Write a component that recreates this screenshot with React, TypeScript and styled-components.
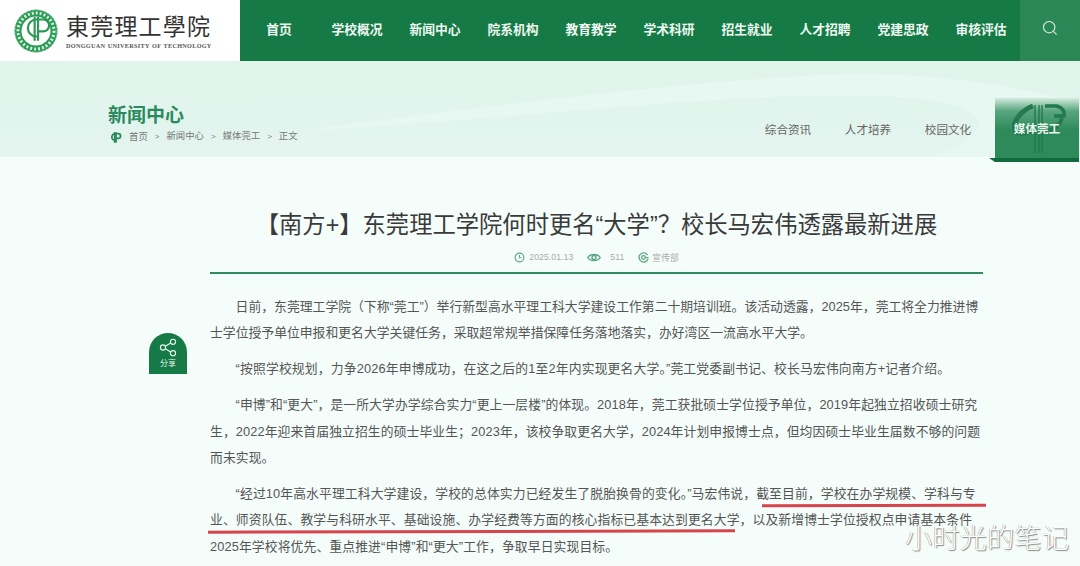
import styled, { createGlobalStyle } from 'styled-components';

const GlobalStyle = createGlobalStyle`
  html, body {
    margin: 0;
    padding: 0;
    height: 566px;
    overflow: hidden;
    background: #f4fdfa;
    font-family: 'Liberation Sans', 'Noto Sans CJK SC', sans-serif;
  }
`;

const Page = styled.div`
  position: relative;
  width: 1080px;
  height: 566px;
  overflow: hidden;
`;

const Header = styled.header`
  display: flex;
  height: 61px;
  background: #fff;
`;

const Brand = styled.div`
  width: 240px;
  display: flex;
  align-items: center;
  gap: 7px;
  padding: 0 0 0 13px;
  box-sizing: border-box;
`;

const BrandText = styled.div`
  display: flex;
  flex-direction: column;
  gap: 2px;
`;

const BrandName = styled.div`
  font-family: 'Noto Sans CJK TC', sans-serif;
  font-size: 23px;
  line-height: 29px;
  letter-spacing: 1.2px;
  color: #333;
  white-space: nowrap;
`;

const BrandEn = styled.div`
  font-family: 'Liberation Serif', serif;
  font-size: 6.2px;
  font-weight: 700;
  line-height: 8px;
  letter-spacing: 0.3px;
  word-spacing: 0.8px;
  color: #555;
  white-space: nowrap;
`;

const Nav = styled.nav`
  width: 780px;
  display: grid;
  grid-template-columns: repeat(10, 78px);
  background: #157a45;
`;

const NavItem = styled.a`
  display: flex;
  align-items: center;
  justify-content: center;
  padding-bottom: 4px;
  color: #eef8f2;
  font-size: 12.8px;
  font-weight: 700;
  white-space: nowrap;
`;

const SearchBox = styled.div`
  width: 60px;
  display: flex;
  align-items: center;
  justify-content: center;
  padding-bottom: 5px;
  background: #2c8757;
`;

const Banner = styled.section`
  position: relative;
  height: 96px;
  display: flex;
  justify-content: space-between;
  align-items: flex-end;
  padding-left: 108px;
  background: linear-gradient(180deg, #e0f4ec 0%, #e3f5ee 100%);
  overflow: visible;
`;

const Waves = styled.svg`
  position: absolute;
  inset: 0;
  width: 100%;
  height: 100%;
`;

const BannerLeft = styled.div`
  position: relative;
  display: flex;
  flex-direction: column;
  gap: 2px;
  padding-bottom: 13px;
`;

const BannerTitle = styled.h2`
  margin: 0;
  font-family: 'Noto Sans CJK SC', sans-serif;
  font-size: 19px;
  line-height: 26px;
  font-weight: 700;
  color: #2b8a5f;
`;

const Crumbs = styled.div`
  display: flex;
  align-items: center;
  font-size: 9.4px;
  line-height: 14px;
  color: #777;
`;

const CrumbLogo = styled.svg`
  width: 14px;
  height: 14px;
  margin-right: 7px;
`;

const CrumbSep = styled.span`
  margin: 0 7px;
  font-size: 8px;
`;

const Tabs = styled.div`
  position: relative;
  display: flex;
  align-items: flex-end;
  height: 100%;
  padding-right: 1px;
`;

const Tab = styled.a`
  width: 80px;
  height: 57px;
  display: flex;
  align-items: center;
  justify-content: center;
  font-size: 11.6px;
  color: #666;
  white-space: nowrap;
`;

const ActiveTab = styled.a`
  position: relative;
  width: 84px;
  height: 64px;
  margin-left: 7px;
  margin-bottom: -5px;
  padding-bottom: 4px;
  box-sizing: border-box;
  display: flex;
  align-items: center;
  justify-content: center;
  font-size: 11.6px;
  font-weight: 700;
  color: #e9f6ef;
  white-space: nowrap;
  background: linear-gradient(180deg, #d4ebdf 0%, #5aa67f 20%, #2e8a5a 50%, #2e8a5a 100%);
  box-shadow: inset 0 -4px 0 #0f6b3e;

  &::before {
    content: '';
    position: absolute;
    left: -6px;
    bottom: 0;
    border-top: 4px solid #0f6b3e;
    border-left: 6px solid transparent;
    height: 0;
    width: 0;
  }
`;

const TabMark = styled.svg`
  position: absolute;
  left: 17px;
  top: 5px;
  width: 56px;
  height: 55px;
`;

const TabLabel = styled.span`
  position: relative;
`;

const Article = styled.main`
  width: 773px;
  margin-left: 210px;
  color: #555;
`;

const Title = styled.h1`
  margin: 0;
  padding-top: 52px;
  font-size: 23.3px;
  line-height: 32px;
  font-weight: 400;
  color: #3a3a3a;
  text-align: center;
  white-space: nowrap;
`;

const Meta = styled.div`
  display: flex;
  align-items: center;
  justify-content: center;
  gap: 14px;
  height: 16px;
  margin-top: 8px;
  padding-bottom: 7px;
  font-size: 8.8px;
  color: #aaa;
`;

const MetaItem = styled.span<{ $gap: number }>`
  display: flex;
  align-items: center;
  gap: ${(p) => p.$gap}px;
`;

const MetaIcon = styled.svg<{ $w?: number }>`
  width: ${(p) => p.$w ?? 11}px;
  height: 11px;
  fill: none;
  stroke: #5aa582;
  stroke-width: 1.2;
`;

const Rule = styled.div`
  height: 2px;
  background: #2f8d61;
`;

const Body = styled.div`
  padding-top: 20px;
`;

const Para = styled.p<{ $track: number }>`
  margin: 0 0 9.5px;
  font-size: 12.8px;
  line-height: 26.4px;
  letter-spacing: ${(p) => p.$track}px;
  text-indent: 2em;
  color: #555;
  white-space: nowrap;
`;

// red strokes that someone drew over the screenshot by hand
const RedStroke = styled.div<{ $left: number; $top: number; $width: number }>`
  position: absolute;
  left: ${(p) => p.$left}px;
  top: ${(p) => p.$top}px;
  width: ${(p) => p.$width}px;
  height: 2.5px;
  background: #d8444c;
  transform: rotate(-0.15deg);
`;

const ShareTag = styled.div`
  position: absolute;
  left: 149px;
  top: 333px;
  width: 38px;
  height: 41px;
  border-radius: 19px 19px 0 0;
  background: #157a45;
  color: #e8f6ee;
  display: flex;
  flex-direction: column;
  align-items: center;
  padding-top: 5px;
  box-sizing: border-box;
  font-size: 8px;
  line-height: 11px;
  gap: 1px;
`;

const Watermark = styled.div`
  position: absolute;
  left: 905px;
  top: 524px;
  font-family: 'Noto Sans CJK SC', sans-serif;
  font-size: 27px;
  line-height: 26px;
  font-weight: 300;
  letter-spacing: 0.4px;
  color: #fff;
  white-space: nowrap;
  text-shadow: 1px 1px 1px #888, -0.5px -0.5px 0 #aaa;
`;

const navItems = ['首页', '学校概况', '新闻中心', '院系机构', '教育教学', '学术科研', '招生就业', '人才招聘', '党建思政', '审核评估'];
const crumbs = ['首页', '新闻中心', '媒体莞工', '正文'];
const tabs = ['综合资讯', '人才培养', '校园文化'];

// the "CP" mark from the school logo
function Mark({ color, width = 3 }: { color: string; width?: number }) {
  return (
    <g fill="none" stroke={color} strokeWidth={width} strokeLinecap="round">
      <path d="M21 10 A10 10 0 1 0 21 30" />
      <path d="M19 8 V34" />
      <path d="M23 8 V34" />
      <path d="M23 10 H29 A7 7 0 0 1 29 24 H23" />
    </g>
  );
}

export default function App() {
  return (
    <Page>
      <GlobalStyle />
      <Header>
        <Brand>
          <svg width="46" height="46" viewBox="0 0 46 46">
            <circle cx="23" cy="23" r="21.5" fill="#2a9a55" />
            <circle cx="23" cy="23" r="14.5" fill="#fff" />
            <circle cx="23" cy="23" r="21" fill="none" stroke="#bfe3cb" strokeWidth="0.6" strokeDasharray="2 1.5" />
            <circle cx="23" cy="23" r="18" fill="none" stroke="#d7efdf" strokeWidth="3" strokeDasharray="2 2" />
            <g transform="translate(5.5 3) scale(0.85)">
              <Mark color="#2a9a55" width={2.6} />
            </g>
          </svg>
          <BrandText>
            <BrandName>東莞理工學院</BrandName>
            <BrandEn>DONGGUAN UNIVERSITY OF TECHNOLOGY</BrandEn>
          </BrandText>
        </Brand>
        <Nav>
          {navItems.map((item) => (
            <NavItem key={item}>{item}</NavItem>
          ))}
        </Nav>
        <SearchBox>
          <svg width="16" height="16" viewBox="0 0 16 16" fill="none" stroke="#d9efe3" strokeWidth="1.1">
            <circle cx="7.2" cy="7.2" r="5.7" />
            <path d="M11.4 11.4 L14.6 14.6" />
          </svg>
        </SearchBox>
      </Header>

      <Banner>
        <Waves viewBox="0 0 1080 96" preserveAspectRatio="none">
          <path d="M300 70 C520 40 700 20 820 14 C900 10 1000 18 1080 44 L1080 96 L930 96 C1000 70 1000 44 900 36 C760 26 500 60 300 70 Z" fill="#e7f7f1" />
        </Waves>
        <BannerLeft>
          <BannerTitle>新闻中心</BannerTitle>
          <Crumbs>
            <CrumbLogo viewBox="0 0 40 40">
              <Mark color="#2b8a5f" width={5} />
            </CrumbLogo>
            {crumbs.map((crumb, i) => (
              <span key={crumb}>
                {i > 0 && <CrumbSep>&gt;</CrumbSep>}
                {crumb}
              </span>
            ))}
          </Crumbs>
        </BannerLeft>
        <Tabs>
          {tabs.map((tab) => (
            <Tab key={tab}>{tab}</Tab>
          ))}
          <ActiveTab>
            <TabMark viewBox="0 0 56 55" fill="none" stroke="#227a4e">
              <path d="M21 3 C10 7 2 17 2 24 C2 31 11 32 21 27" strokeWidth="5" />
              <path d="M23 2 V50 M27 2 V50 M30 2 V50" strokeWidth="1.4" />
              <path d="M33 3 H44 C50 4 53 8 52 13 L42 13 M50 15 C48 23 42 27 33 28" strokeWidth="3.5" />
            </TabMark>
            <TabLabel>媒体莞工</TabLabel>
          </ActiveTab>
        </Tabs>
      </Banner>

      <Article>
        <Title>【南方+】东莞理工学院何时更名“大学”？校长马宏伟透露最新进展</Title>
        <Meta>
          <MetaItem $gap={4}>
            <MetaIcon viewBox="0 0 12 12">
              <circle cx="6" cy="6" r="4.8" />
              <path d="M6 3.4 V6.2 H8.2" />
            </MetaIcon>
            2025.01.13
          </MetaItem>
          <MetaItem $gap={9}>
            <MetaIcon $w={14} viewBox="0 0 14 11">
              <path d="M0.8 5.5 C3 1.4 11 1.4 13.2 5.5 C11 9.6 3 9.6 0.8 5.5 Z" strokeWidth="1.4" />
              <circle cx="7" cy="5.5" r="2" strokeWidth="1.4" />
            </MetaIcon>
            511
          </MetaItem>
          <MetaItem $gap={3}>
            <MetaIcon viewBox="0 0 12 12">
              <path d="M10.4 3.4 A5 5 0 1 0 11 7" strokeWidth="1.4" />
              <circle cx="6" cy="6" r="2" strokeWidth="1.4" />
              <path d="M8 6 H11.4" strokeWidth="1.2" />
            </MetaIcon>
            宣传部
          </MetaItem>
        </Meta>
        <Rule />
        <Body>
          <Para $track={0.03}>
            日前，东莞理工学院（下称“莞工”）举行新型高水平理工科大学建设工作第二十期培训班。该活动透露，2025年，莞工将全力推进博
            <br />
            士学位授予单位申报和更名大学关键任务，采取超常规举措保障任务落地落实，办好湾区一流高水平大学。
          </Para>
          <Para $track={0.16}>“按照学校规划，力争2026年申博成功，在这之后的1至2年内实现更名大学。”莞工党委副书记、校长马宏伟向南方+记者介绍。</Para>
          <Para $track={0.1}>
            “申博”和“更大”，是一所大学办学综合实力“更上一层楼”的体现。2018年，莞工获批硕士学位授予单位，2019年起独立招收硕士研究
            <br />
            生，2022年迎来首届独立招生的硕士毕业生；2023年，该校争取更名大学，2024年计划申报博士点，但均因硕士毕业生届数不够的问题
            <br />
            而未实现。
          </Para>
          <Para $track={0.12}>
            “经过10年高水平理工科大学建设，学校的总体实力已经发生了脱胎换骨的变化。”马宏伟说，截至目前，学校在办学规模、学科与专
            <br />
            业、师资队伍、教学与科研水平、基础设施、办学经费等方面的核心指标已基本达到更名大学，以及新增博士学位授权点申请基本条件
            <br />
            2025年学校将优先、重点推进“申博”和“更大”工作，争取早日实现目标。
          </Para>
        </Body>
      </Article>

      <RedStroke $left={762} $top={504} $width={224} />
      <RedStroke $left={208} $top={530} $width={527} />
      <ShareTag>
        <svg width="19" height="19" viewBox="0 0 19 19" fill="none" stroke="#e8f6ee" strokeWidth="1.1">
          <circle cx="4" cy="9.5" r="2.6" />
          <circle cx="14" cy="3.8" r="2.6" />
          <circle cx="14" cy="15.2" r="2.6" />
          <path d="M6.3 8.2 L11.7 5.1 M6.3 10.8 L11.7 13.9" />
        </svg>
        分享
      </ShareTag>
      <Watermark>小时光的笔记</Watermark>
    </Page>
  );
}
